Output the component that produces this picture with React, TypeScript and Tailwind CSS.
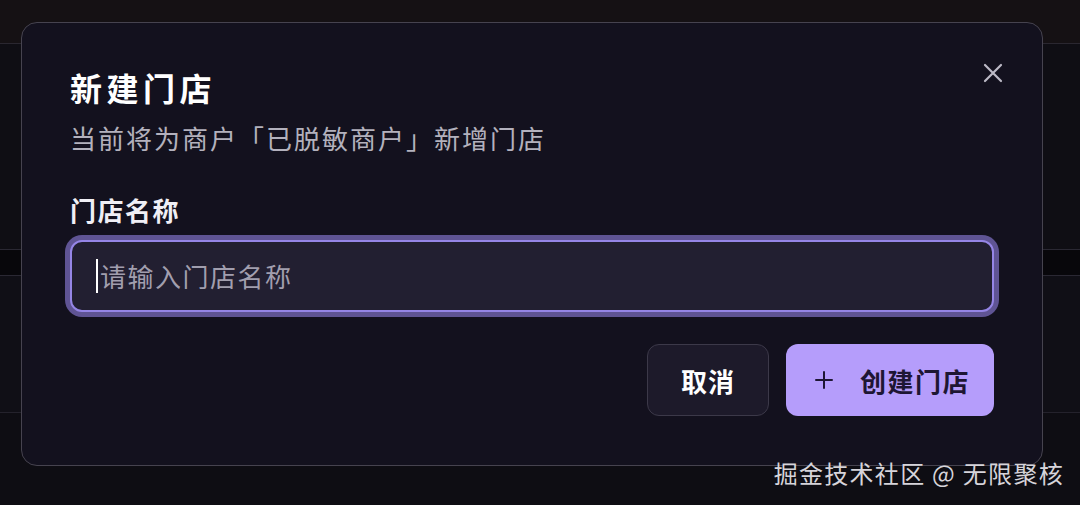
import React from "react";

const font = { fontFamily: '"Noto Sans CJK SC", "Noto Sans", sans-serif' };

export default function App() {
  return (
    <div className="relative w-[1080px] h-[505px] overflow-hidden bg-[#0e0d13]" style={font}>
      {/* background page (dimmed) */}
      <div className="flex flex-col w-full">
        <div className="h-[44px] bg-[#151114] border-b border-[#2a2730]" />
        <div className="h-[206px] bg-[#0f0e14] border-b border-[#2a2833]" />
        <div className="h-[26px] bg-[#08070b] border-b border-[#2a2833]" />
        <div className="h-[137px] bg-[#100f16] border-b border-[#24222c]" />
        <div className="h-[90px] bg-[#0e0d13]" />
      </div>

      {/* dialog */}
      <div className="absolute left-[21px] top-[22px] w-[1022px] h-[444px] rounded-[16px] border border-[#46434f] bg-[#13111e] px-[48px] pt-[46px] flex flex-col">
        <button className="absolute right-[39px] top-[40px] w-[20px] h-[20px] flex items-center justify-center">
          <svg width="20" height="20" viewBox="0 0 20 20" fill="none" stroke="#bcbac6" strokeWidth="2.2" strokeLinecap="round">
            <path d="M2 2 L18 18 M18 2 L2 18" />
          </svg>
        </button>
        <h2 className="text-[32px] leading-[36px] font-bold tracking-[4.5px] text-white">新建门店</h2>
        <p className="mt-[15px] text-[26px] leading-[36px] tracking-[2px] text-[#b3b1bd]">当前将为商户「已脱敏商户」新增门店</p>
        <label className="mt-[37px] text-[26px] leading-[34px] font-bold tracking-[1.5px] text-[#f0eff5]">门店名称</label>
        <div className="mt-[13px] h-[72px] rounded-[12px] border-2 border-[#9585e6] bg-[#221f31] shadow-[0_0_0_5px_#5f5494] flex items-center pl-[24px]">
          <span className="w-[2px] h-[34px] bg-white" />
          <span className="ml-[2px] text-[26px] leading-[34px] tracking-[1.5px] text-[#a19eae]">请输入门店名称</span>
        </div>
        <div className="mt-[32px] flex justify-end gap-[17px]">
          <button className="w-[122px] h-[72px] rounded-[12px] border-[1.5px] border-[#3c3949] bg-[#1d1a2a] text-[26px] font-bold tracking-[1px] text-white flex items-center justify-center">
            取消
          </button>
          <button className="w-[208px] h-[72px] rounded-[12px] bg-[#b59dfb] flex items-center pl-[29px] text-[#1e1633]">
            <svg width="18" height="18" viewBox="0 0 18 18" fill="none" stroke="#1e1633" strokeWidth="2" strokeLinecap="round">
              <path d="M9 1 V17 M1 9 H17" />
            </svg>
            <span className="ml-[27px] text-[26px] font-bold tracking-[1.5px]">创建门店</span>
          </button>
        </div>
      </div>

      {/* watermark */}
      <div className="absolute right-[16px] top-[458px] text-[24px] leading-[30px] tracking-[1.3px] text-[#d6d4da] whitespace-nowrap">
        掘金技术社区 @ 无限聚核
      </div>
    </div>
  );
}
